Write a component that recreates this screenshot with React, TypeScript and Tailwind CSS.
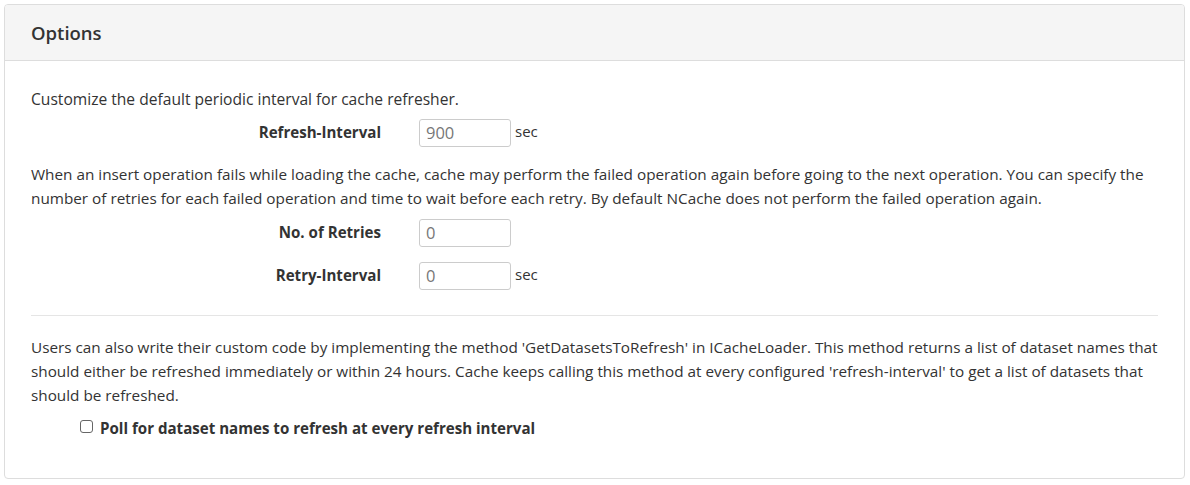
import React from "react";

const font = { fontFamily: '"Open Sans", "Noto Sans", sans-serif' };

function Row({ label, value, unit }: { label: string; value: string; unit?: boolean }) {
  return (
    <div className="flex items-center h-[28px]">
      <div className="w-[350px] text-right font-bold text-[15.1px] text-[#333] -mt-[2px]">{label}</div>
      <div className="ml-[38px] w-[92px] h-[28px] border border-[#ccc] rounded-[3px] flex items-center px-[6px] text-[16.5px] text-[#777]">
        {value}
      </div>
      {unit && <span className="ml-[4px] text-[15px] text-[#333] -mt-[4px]">sec</span>}
    </div>
  );
}

function Lines({ lines, className }: { lines: string[]; className?: string }) {
  return (
    <div className={className}>
      {lines.map((l, i) => (
        <div key={i} className="whitespace-nowrap">{l}</div>
      ))}
    </div>
  );
}

export default function App() {
  return (
    <div className="p-[4px] bg-white" style={font}>
      <div className="w-[1181px] h-[475px] border border-[#ddd] rounded-[4px] overflow-hidden flex flex-col">
        <div className="h-[56px] bg-[#f5f5f5] border-b border-[#ddd] px-[26px] flex items-center">
          <span className="text-[18.5px] font-semibold text-[#333] mt-[1px]">Options</span>
        </div>
        <div className="px-[26px] pt-[26px] text-[15.3px] leading-[24px] text-[#333]">
          <p className="text-[15.6px]">Customize the default periodic interval for cache refresher.</p>
          <div className="mt-[8px]">
            <Row label="Refresh-Interval" value="900" unit />
          </div>
          <Lines
            className="mt-[15px]"
            lines={[
              "When an insert operation fails while loading the cache, cache may perform the failed operation again before going to the next operation. You can specify the",
              "number of retries for each failed operation and time to wait before each retry. By default NCache does not perform the failed operation again.",
            ]}
          />
          <div className="mt-[9px]">
            <Row label="No. of Retries" value="0" />
          </div>
          <div className="mt-[15px]">
            <Row label="Retry-Interval" value="0" unit />
          </div>
          <div className="mt-[25px] border-t border-[#e5e5e5]" />
          <Lines
            className="mt-[19px]"
            lines={[
              "Users can also write their custom code by implementing the method 'GetDatasetsToRefresh' in ICacheLoader. This method returns a list of dataset names that",
              "should either be refreshed immediately or within 24 hours. Cache keeps calling this method at every configured 'refresh-interval' to get a list of datasets that",
              "should be refreshed.",
            ]}
          />
          <div className="mt-[9px] flex items-center pl-[49px]">
            <span className="w-[13px] h-[13px] border border-[#666] rounded-[3px] bg-white inline-block -mt-[3px]" />
            <span className="ml-[7px] font-bold text-[15.1px] text-[#333]">Poll for dataset names to refresh at every refresh interval</span>
          </div>
        </div>
      </div>
    </div>
  );
}
